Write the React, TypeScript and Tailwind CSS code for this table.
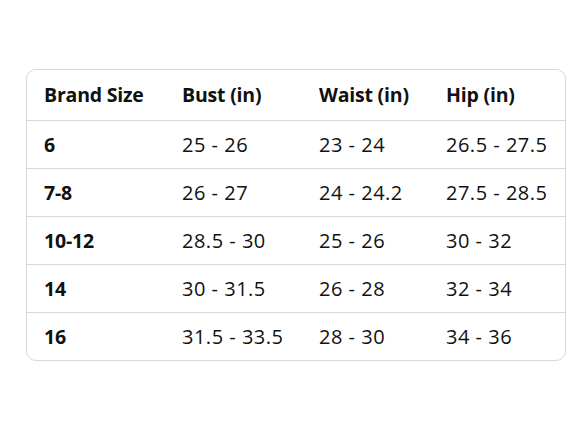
const rows = [
  ["6", "25 - 26", "23 - 24", "26.5 - 27.5"],
  ["7-8", "26 - 27", "24 - 24.2", "27.5 - 28.5"],
  ["10-12", "28.5 - 30", "25 - 26", "30 - 32"],
  ["14", "30 - 31.5", "26 - 28", "32 - 34"],
  ["16", "31.5 - 33.5", "28 - 30", "34 - 36"],
];

const headers = ["Brand Size", "Bust (in)", "Waist (in)", "Hip (in)"];

export default function App() {
  return (
    <main
      className="w-[588px] h-[441px] bg-white pt-[69px] pl-[26px]"
      style={{ fontFamily: '"Open Sans", "Noto Sans", sans-serif' }}
    >
      <div className="w-[540px] rounded-[10px] border border-[#d5d9d9] overflow-hidden">
        {/* header */}
        <div className="grid grid-cols-[138px_137px_127px_1fr] h-[50px] items-center pl-[17px] text-[19.5px] tracking-[-0.2px] font-bold text-[#111111]">
          {headers.map((h) => (
            <div key={h}>{h}</div>
          ))}
        </div>
        {rows.map((r) => (
          <div
            key={r[0]}
            className="grid grid-cols-[138px_137px_127px_1fr] h-[48px] items-center pl-[17px] text-[20px] tracking-[0.5px] text-[#111111] border-t border-[#d5d9d9]"
          >
            <div className="font-bold tracking-[-0.2px] text-[19.5px]">{r[0]}</div>
            <div>{r[1]}</div>
            <div>{r[2]}</div>
            <div>{r[3]}</div>
          </div>
        ))}
      </div>
    </main>
  );
}
